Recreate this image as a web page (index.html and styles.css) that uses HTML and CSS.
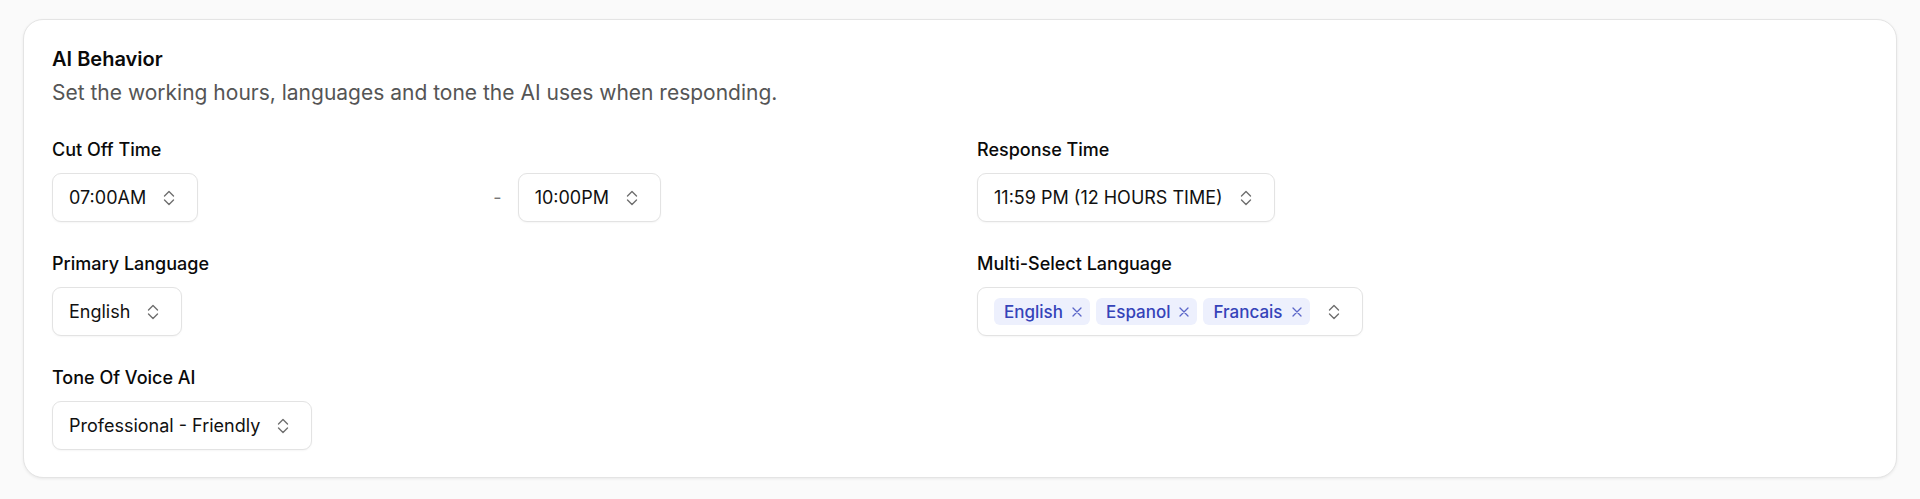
FILE: index.html
```html
<!DOCTYPE html>
<html lang="en">
<head>
    <meta charset="UTF-8">
    <meta name="viewport" content="width=device-width, initial-scale=1.0">
    <title>AI Behavior</title>
    <link rel="stylesheet" href="styles.css">
</head>
<body>
    <section class="card">
        <h2 class="card-title">AI Behavior</h2>
        <p class="card-desc">Set the working hours, languages and tone the AI uses when responding.</p>

        <div class="form-grid">
            <div class="field">
                <label>Cut Off Time</label>
                <div class="time-range">
                    <div class="select">
                        <span>07:00AM</span>
                        <svg class="chevrons" width="12" height="16" viewBox="0 0 12 16"><path d="M1.5 6 6 1.5 10.5 6M1.5 10 6 14.5 10.5 10"/></svg>
                    </div>
                    <span class="dash">-</span>
                    <div class="select">
                        <span>10:00PM</span>
                        <svg class="chevrons" width="12" height="16" viewBox="0 0 12 16"><path d="M1.5 6 6 1.5 10.5 6M1.5 10 6 14.5 10.5 10"/></svg>
                    </div>
                </div>
            </div>

            <div class="field">
                <label>Response Time</label>
                <div class="select">
                    <span>11:59 PM (12 HOURS TIME)</span>
                    <svg class="chevrons" width="12" height="16" viewBox="0 0 12 16"><path d="M1.5 6 6 1.5 10.5 6M1.5 10 6 14.5 10.5 10"/></svg>
                </div>
            </div>

            <div class="field">
                <label>Primary Language</label>
                <div class="select">
                    <span>English</span>
                    <svg class="chevrons" width="12" height="16" viewBox="0 0 12 16"><path d="M1.5 6 6 1.5 10.5 6M1.5 10 6 14.5 10.5 10"/></svg>
                </div>
            </div>

            <div class="field">
                <label>Multi-Select Language</label>
                <div class="select multi">
                    <div class="chips">
                        <span class="chip">English <svg width="10" height="10" viewBox="0 0 10 10"><path d="M1 1 9 9M9 1 1 9"/></svg></span>
                        <span class="chip">Espanol <svg width="10" height="10" viewBox="0 0 10 10"><path d="M1 1 9 9M9 1 1 9"/></svg></span>
                        <span class="chip">Francais <svg width="10" height="10" viewBox="0 0 10 10"><path d="M1 1 9 9M9 1 1 9"/></svg></span>
                    </div>
                    <svg class="chevrons" width="12" height="16" viewBox="0 0 12 16"><path d="M1.5 6 6 1.5 10.5 6M1.5 10 6 14.5 10.5 10"/></svg>
                </div>
            </div>

            <div class="field">
                <label>Tone Of Voice AI</label>
                <div class="select">
                    <span>Professional - Friendly</span>
                    <svg class="chevrons" width="12" height="16" viewBox="0 0 12 16"><path d="M1.5 6 6 1.5 10.5 6M1.5 10 6 14.5 10.5 10"/></svg>
                </div>
            </div>
        </div>
    </section>
</body>
</html>
```

FILE: styles.css
```css
body {
    margin: 0;
    padding: 19px 23px;
    font-family: Inter, "Noto Sans", sans-serif;
    background: #fafafa;
    color: #111;
}

.card {
    background: white;
    border: 1px solid #e4e4e4;
    border-radius: 20px;
    box-shadow: 0 1px 3px rgba(0, 0, 0, 0.07);
    padding: 27px 28px;
}

.card-title {
    margin: 0;
    font-size: 20px;
    line-height: 24px;
    font-weight: 600;
    color: #0a0a0a;
}

.card-desc {
    margin: 8px 0 0;
    font-size: 21px;
    line-height: 28px;
    color: #555;
}

.form-grid {
    margin-top: 29px;
    display: grid;
    grid-template-columns: 1fr 1fr;
    column-gap: 34px;
    row-gap: 28px;
}

.field {
    display: flex;
    flex-direction: column;
    align-items: flex-start;
    gap: 10px;
}

.field label {
    font-size: 18px;
    line-height: 27px;
    font-weight: 500;
    color: #0a0a0a;
}

.time-range {
    width: 100%;
    display: grid;
    grid-template-columns: 1fr auto 1fr;
    align-items: center;
    gap: 16px;
}

.time-range .select {
    justify-self: start;
}

.dash {
    font-size: 18px;
    color: #777;
}

.select {
    display: inline-flex;
    align-items: center;
    gap: 17px;
    height: 49px;
    box-sizing: border-box;
    padding: 0 22px 0 16px;
    border: 1px solid #e3e3e3;
    border-radius: 9px;
    box-shadow: 0 1px 2px rgba(0, 0, 0, 0.04);
    font-size: 18px;
    color: #111;
    background: white;
}

.chevrons {
    fill: none;
    stroke: #6f6f6f;
    stroke-width: 1.4;
    stroke-linecap: round;
    stroke-linejoin: round;
    flex-shrink: 0;
}

.select.multi {
    gap: 18px;
}

.chips {
    display: flex;
    gap: 6px;
}

.chip {
    display: inline-flex;
    align-items: center;
    gap: 9px;
    height: 27px;
    padding: 0 8px 0 10px;
    border-radius: 6px;
    background: #edf0fd;
    color: #3543b9;
    font-size: 17px;
    font-weight: 500;
}

.chip svg {
    fill: none;
    stroke: #5b66c9;
    stroke-width: 1.3;
    stroke-linecap: round;
}
```
